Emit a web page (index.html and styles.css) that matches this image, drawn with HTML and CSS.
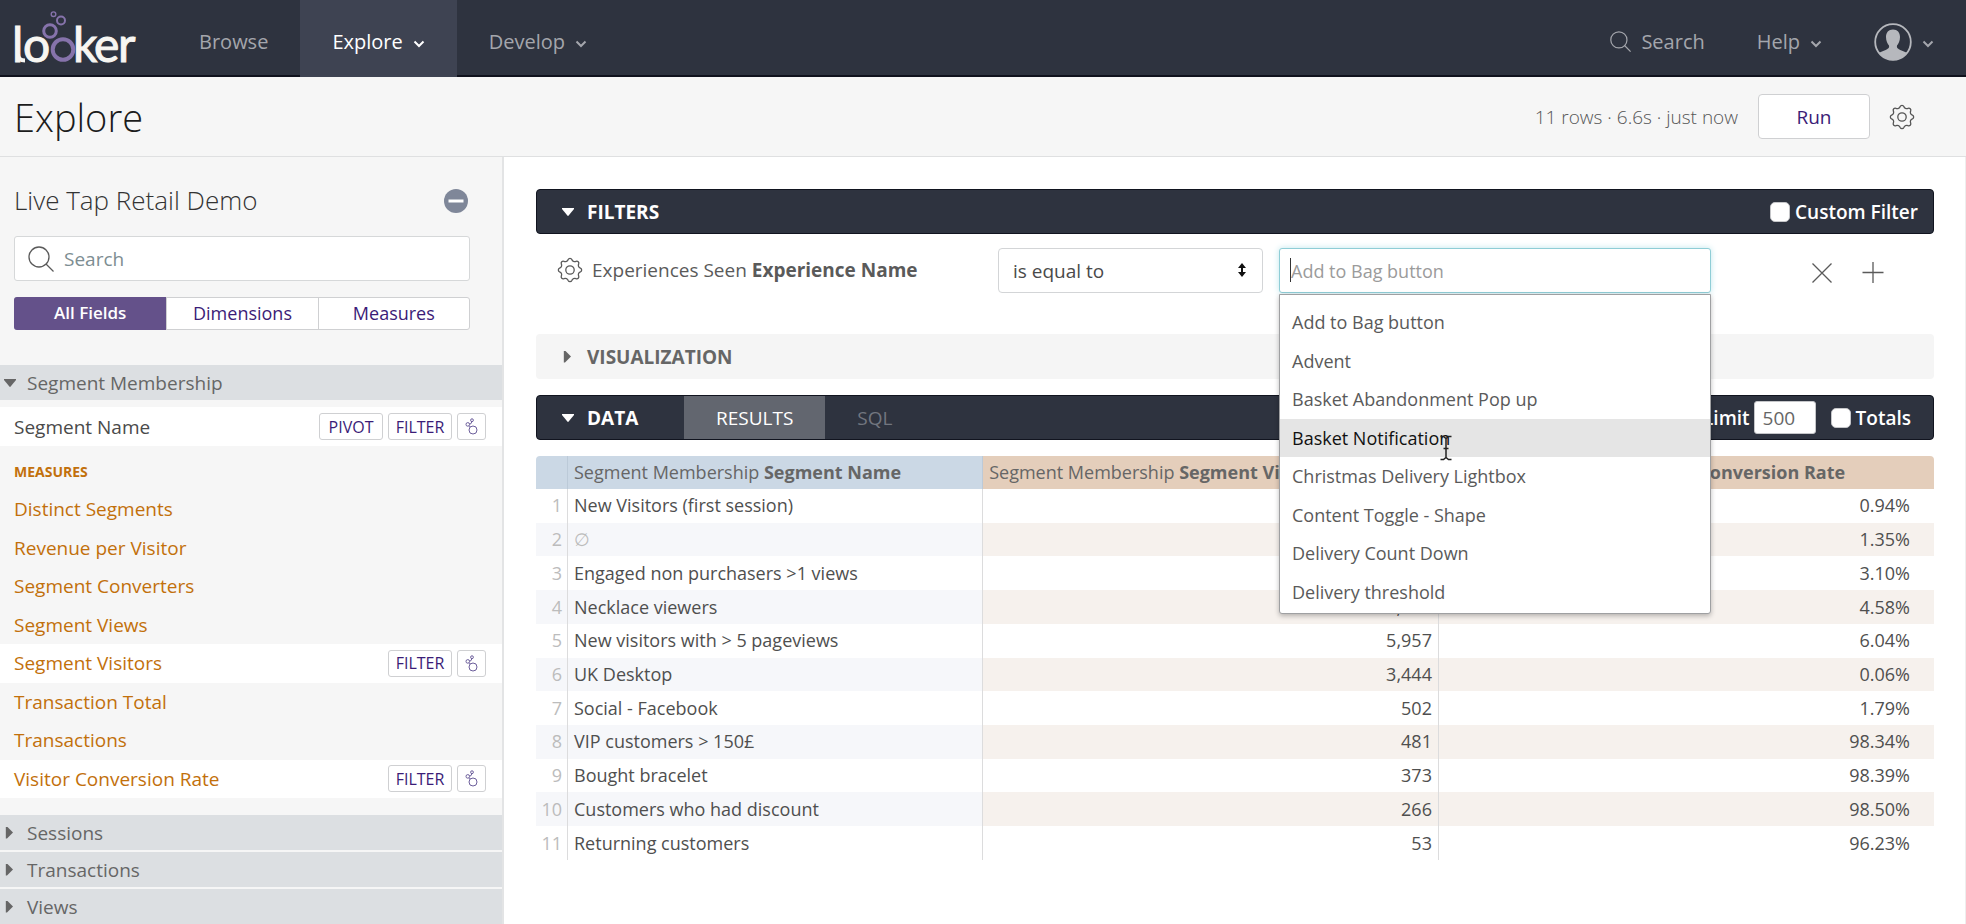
FILE: index.html
```html
<!DOCTYPE html>
<html lang="en">
<head>
<meta charset="utf-8">
<title>Explore - Looker</title>
<link rel="stylesheet" href="styles.css">
</head>
<body>
<svg class="defs" width="0" height="0" aria-hidden="true">
  <symbol id="gear" viewBox="-13 -13 26 26"><path d="M10.44-1.84A2 2 0 0 1 10.44 1.84A3 3 0 0 0 8.68 6.08A2 2 0 0 1 6.08 8.68A3 3 0 0 0 1.84 10.44A2 2 0 0 1-1.84 10.44A3 3 0 0 0-6.08 8.68A2 2 0 0 1-8.68 6.08A3 3 0 0 0-10.44 1.84A2 2 0 0 1-10.44-1.84A3 3 0 0 0-8.68-6.08A2 2 0 0 1-6.08-8.68A3 3 0 0 0-1.84-10.44A2 2 0 0 1 1.84-10.44A3 3 0 0 0 6.08-8.68A2 2 0 0 1 8.68-6.08A3 3 0 0 0 10.44-1.84Z"/><circle r="4.2"/></symbol>
  <symbol id="chevron" viewBox="0 0 12 8"><path d="M1.5 1.5L6 6L10.5 1.5"/></symbol>
  <symbol id="lens" viewBox="0 0 26 26"><circle cx="11" cy="11" r="10"/><path d="M18 18L25.5 25.5"/></symbol>
  <symbol id="bubbles" viewBox="0 0 13 17"><circle cx="8" cy="12" r="4"/><circle cx="2.8" cy="6.4" r="1.8"/><circle cx="7" cy="2.2" r="1.4"/><path d="M4.2 7.8L5.2 9M4.6 6.2Q6.6 6 6.8 3.6"/></symbol>
</svg>

<nav class="topbar">
  <a class="logo" href="#" aria-label="looker">
    <svg width="128" height="64" viewBox="0 0 128 64">
      <g class="logo-text">
        <text x="-1" y="51">l</text>
        <text x="10" y="51">o</text>
        <text x="60" y="51">k</text>
        <text x="81" y="51">e</text>
        <text x="105" y="51">r</text>
      </g>
      <path class="logo-tail" d="M5 43Q5 49.5 12 49.5"/>
      <g class="logo-rings">
        <circle cx="50" cy="38.5" r="10.3" stroke-width="4"/>
        <circle cx="37" cy="20" r="6.3" stroke-width="3"/>
        <circle cx="48" cy="9.5" r="4" stroke-width="2"/>
        <circle cx="40.5" cy="3.2" r="2.3" stroke-width="1.4"/>
      </g>
    </svg>
  </a>
  <a class="nav-item" href="#">Browse</a>
  <a class="nav-item active" href="#">Explore <svg class="chev"><use href="#chevron"/></svg></a>
  <a class="nav-item" href="#">Develop <svg class="chev"><use href="#chevron"/></svg></a>
  <div class="nav-right">
    <a href="#"><svg class="nav-lens"><use href="#lens"/></svg>Search</a>
    <a href="#">Help <svg class="chev"><use href="#chevron"/></svg></a>
    <a href="#" aria-label="Account">
      <svg class="avatar" viewBox="0 0 38 38"><circle cx="19" cy="19" r="17.8" fill="none" stroke="#b6b8bd" stroke-width="1.8"/><path d="M19 6.5C23.5 6.5 26 9.5 26 14C26 18 24.5 20.5 23 22.5C22.5 25.5 23.5 26 33.5 30A18.3 18.3 0 0 1 4.5 30C14.5 26 15.5 25.5 15 22.5C13.5 20.5 12 18 12 14C12 9.5 14.5 6.5 19 6.5Z" fill="#b6b8bd"/></svg>
      <svg class="chev"><use href="#chevron"/></svg></a>
  </div>
</nav>

<header class="page-head">
  <h1>Explore</h1>
  <span class="status">11 rows · 6.6s · just now</span>
  <button class="run">Run</button>
  <button class="icon-btn" aria-label="Settings"><svg class="gear"><use href="#gear"/></svg></button>
</header>

<div class="body">
  <aside class="sidebar">
    <div class="side-top">
      <div class="side-title">
        <h2>Live Tap Retail Demo</h2>
        <button class="icon-btn" aria-label="Collapse"><svg width="24" height="24" viewBox="0 0 24 24"><circle cx="12" cy="12" r="12" fill="#7f8799" stroke="none"/><path d="M4.5 12H19.5" stroke="#fff" stroke-width="3"/></svg></button>
      </div>
      <div class="side-search">
        <svg class="side-lens"><use href="#lens"/></svg>
        <input type="search" placeholder="Search" aria-label="Search fields">
      </div>
      <div class="segmented">
        <button class="on">All Fields</button><button>Dimensions</button><button>Measures</button>
      </div>
    </div>

    <button class="group open"><i class="tri down"></i>Segment Membership</button>
    <div class="field picked dimension">
      <span>Segment Name</span>
      <button class="tag">PIVOT</button><button class="tag">FILTER</button><button class="tag look" aria-label="Look"><svg><use href="#bubbles"/></svg></button>
    </div>
    <h3>MEASURES</h3>
    <div class="fields">
      <div class="field"><span>Distinct Segments</span></div>
      <div class="field"><span>Revenue per Visitor</span></div>
      <div class="field"><span>Segment Converters</span></div>
      <div class="field"><span>Segment Views</span></div>
      <div class="field picked"><span>Segment Visitors</span><button class="tag">FILTER</button><button class="tag look" aria-label="Look"><svg><use href="#bubbles"/></svg></button></div>
      <div class="field"><span>Transaction Total</span></div>
      <div class="field"><span>Transactions</span></div>
      <div class="field picked"><span>Visitor Conversion Rate</span><button class="tag">FILTER</button><button class="tag look" aria-label="Look"><svg><use href="#bubbles"/></svg></button></div>
    </div>
    <div class="groups">
      <button class="group"><i class="tri right"></i>Sessions</button>
      <button class="group"><i class="tri right"></i>Transactions</button>
      <button class="group"><i class="tri right"></i>Views</button>
    </div>
  </aside>

  <main>
    <section class="bar dark">
      <button class="bar-title"><i class="tri down"></i>FILTERS</button>
      <label class="check"><input type="checkbox">Custom Filter</label>
    </section>

    <div class="filter-row">
      <div class="filter-name"><svg class="gear"><use href="#gear"/></svg><span>Experiences Seen <b>Experience Name</b></span></div>
      <div class="select">
        <select aria-label="Condition"><option>is equal to</option></select>
        <svg width="8" height="14" viewBox="0 0 8 14"><path d="M4 0L8 5H5V9H8L4 14L0 9H3V5H0Z"/></svg>
      </div>
      <div class="combo">
        <input type="text" placeholder="Add to Bag button" aria-label="Experience name">
        <i class="caret"></i>
        <div class="menu" role="listbox">
          <div role="option">Add to Bag button</div>
          <div role="option">Advent</div>
          <div role="option">Basket Abandonment Pop up</div>
          <div role="option" class="hover">Basket Notification</div>
          <div role="option">Christmas Delivery Lightbox</div>
          <div role="option">Content Toggle - Shape</div>
          <div role="option">Delivery Count Down</div>
          <div role="option">Delivery threshold</div>
          <svg class="pointer" width="14" height="26" viewBox="0 0 14 26"><path d="M1.5 1.5H4.5L7 3.5L9.5 1.5H12.5M7 3.5V22.5M1.5 24.5H4.5L7 22.5L9.5 24.5H12.5M4.5 13.5H9.5"/></svg>
        </div>
      </div>
      <div class="filter-actions">
        <button class="icon-btn" aria-label="Remove filter"><svg width="22" height="22" viewBox="0 0 22 22"><path d="M1.5 1.5L20.5 20.5M20.5 1.5L1.5 20.5"/></svg></button>
        <button class="icon-btn" aria-label="Add filter"><svg width="22" height="22" viewBox="0 0 22 22"><path d="M0.5 10.5H21.5M11 0V21"/></svg></button>
      </div>
    </div>

    <section class="bar light">
      <button class="bar-title"><i class="tri right"></i>VISUALIZATION</button>
    </section>

    <section class="bar dark">
      <button class="bar-title data"><i class="tri down"></i>DATA</button>
      <button class="tab on">RESULTS</button>
      <button class="tab">SQL</button>
      <label class="limit">Row Limit <input type="text" value="500"></label>
      <label class="check totals"><input type="checkbox">Totals</label>
    </section>

    <table>
      <colgroup><col class="c-num"><col class="c-name"><col class="c-vis"><col></colgroup>
      <thead><tr><th></th><th>Segment Membership <b>Segment Name</b></th><th>Segment Membership <b>Segment Visitors</b></th><th>Segment Membership <b>Visitor Conversion Rate</b></th></tr></thead>
      <tbody>
        <tr><td>1</td><td>New Visitors (first session)</td><td></td><td>0.94%</td></tr>
        <tr><td>2</td><td class="null">∅</td><td></td><td>1.35%</td></tr>
        <tr><td>3</td><td>Engaged non purchasers &gt;1 views</td><td></td><td>3.10%</td></tr>
        <tr><td>4</td><td>Necklace viewers</td><td>6,122</td><td>4.58%</td></tr>
        <tr><td>5</td><td>New visitors with &gt; 5 pageviews</td><td>5,957</td><td>6.04%</td></tr>
        <tr><td>6</td><td>UK Desktop</td><td>3,444</td><td>0.06%</td></tr>
        <tr><td>7</td><td>Social - Facebook</td><td>502</td><td>1.79%</td></tr>
        <tr><td>8</td><td>VIP customers &gt; 150£</td><td>481</td><td>98.34%</td></tr>
        <tr><td>9</td><td>Bought bracelet</td><td>373</td><td>98.39%</td></tr>
        <tr><td>10</td><td>Customers who had discount</td><td>266</td><td>98.50%</td></tr>
        <tr><td>11</td><td>Returning customers</td><td>53</td><td>96.23%</td></tr>
      </tbody>
    </table>
  </main>
</div>
</body>
</html>
```
FILE: styles.css
```css
* { box-sizing: border-box; }
body {
  margin: 0;
  min-height: 100vh;
  display: flex;
  flex-direction: column;
  font-family: "Open Sans", "Noto Sans", sans-serif;
  font-size: 19px;
  color: #5a5a5a;
  background: #fff;
}
button, input, select { font: inherit; color: inherit; margin: 0; }
button { border: 0; padding: 0; background: none; cursor: pointer; }
a { color: inherit; text-decoration: none; }
svg { fill: none; stroke: currentColor; flex: none; }
.defs { position: absolute; }
h1, h2, h3 { margin: 0; font-weight: 300; }

/* top navigation */
.topbar {
  height: 77px;
  display: flex;
  background: #2e333f;
  color: #a4a6ac;
  font-size: 20px;
  border-bottom: 2px solid #10121d;
}
.logo { width: 167px; padding: 11px 0 0 13px; }
.logo-text text { font: 48px Lato, sans-serif; fill: #f7f6f2; stroke: #f7f6f2; stroke-width: 1; }
.logo-tail { stroke: #f7f6f2; stroke-width: 4; }
.logo-rings { stroke: #8673ab; }
.nav-item { display: flex; align-items: center; gap: 10px; padding: 8px 32px 0; }
.nav-item.active { background: #3e4352; color: #fff; margin-bottom: -2px; padding-bottom: 2px; }
.chev { width: 12px; height: 8px; stroke-width: 2; margin-top: 4px; }
.nav-right { margin-left: auto; display: flex; padding: 8px 32px 0 0; gap: 52px; }
.nav-right a { display: flex; align-items: center; gap: 10px; }
.nav-lens { width: 21px; height: 21px; stroke-width: 1.5; }
.avatar { width: 38px; height: 38px; stroke: none; }

/* page heading */
.page-head {
  height: 80px;
  display: flex;
  align-items: center;
  padding: 0 51px 0 14px;
  background: #f6f6f6;
  border-bottom: 1px solid #dfe0e1;
  color: #555;
}
.status { font-weight: 300; }
h1 { font-size: 38px; color: #1c1c1c; margin-right: auto; }
.run {
  width: 112px;
  height: 45px;
  margin: 0 19px 0 20px;
  background: #fff;
  border: 1px solid #cfd0d2;
  border-radius: 4px;
  color: #3b1c77;
}
.icon-btn { display: flex; }
.gear { width: 26px; height: 26px; stroke-width: 1.3; }

.body { flex: 1; display: flex; }

/* field picker */
.sidebar { width: 504px; flex: none; background: #f6f6f6; border-right: 2px solid #e3e4e5; }
.side-top { padding: 0 32px 0 14px; }
.side-title { display: flex; justify-content: space-between; align-items: center; height: 79px; padding: 8px 2px 0 0; }
h2 { font-size: 26px; line-height: 32px; padding-bottom: 2px; color: #333; }
.side-search { display: flex; align-items: center; height: 45px; gap: 10px; padding: 0 13px; background: #fff; border: 1px solid #d6d8d9; border-radius: 3px; }
.side-lens { width: 26px; height: 26px; stroke-width: 1.3; }
.side-search input { flex: 1; min-width: 0; border: 0; padding: 0; background: none; outline: 0; }
.side-search input::placeholder { color: #7d8d92; }
.segmented { display: grid; grid-template-columns: repeat(3, 1fr); height: 33px; margin: 16px 0 35px; border: 1px solid #cfd0d2; border-radius: 3px; background: #fff; font-size: 18px; line-height: 28px; color: #3b1c77; }
.segmented button { padding-bottom: 2px; }
.segmented button + button { border-left: 1px solid #cfd0d2; }
.segmented .on { background: #64518a; color: #fff; font-size: 17px; font-weight: 600; margin: -1px 0 -1px -1px; border-radius: 3px 0 0 3px; }

.group { display: flex; align-items: center; width: 100%; height: 35px; background: #dcdfe2; text-align: left; color: #666; }
.group .tri { margin: 0 11px 0 4px; }
.groups { display: grid; gap: 2px; margin-top: 17px; }
.tri { width: 12px; height: 12px; flex: none; background: currentColor; }
.tri.down { clip-path: polygon(0 20%, 100% 20%, 100% 30%, 50% 90%, 0 30%); }
.tri.right { clip-path: polygon(15% 0, 25% 0, 75% 50%, 25% 100%, 15% 100%); }

.fields { display: grid; grid-auto-rows: 1fr; height: 308px; }
.field { display: flex; align-items: center; gap: 5px; padding: 0 16px 0 14px; color: #c2700b; }
.field.dimension { height: 39px; margin-top: 7px; color: #4a4a4a; }
.field.picked { background: #fff; }
.field span { flex: 1; }
.tag { width: 64px; height: 27px; display: flex; align-items: center; justify-content: center; border: 1px solid #cfd0d2; border-radius: 3px; background: #fff; color: #3b1c77; font-size: 16px; line-height: 22px; }
.tag.look { width: 29px; color: #6d5f9c; }
.tag svg { width: 13px; height: 17px; stroke-width: 1; }
h3 { font-size: 14px; font-weight: 700; color: #c2700b; line-height: 20px; padding: 16px 14px 8px; }

/* explore panels */
main { flex: 1; min-width: 0; padding: 32px 31px 0 32px; border-right: 1px solid #eee; }
.bar { display: flex; align-items: stretch; height: 45px; border-radius: 4px; }
.bar.dark { background: #2e333f; color: #fff; border: 1px solid #11141f; }
.bar.light { background: #f5f5f5; color: #666; margin-bottom: 16px; }
.bar-title { display: flex; align-items: center; gap: 13px; padding-left: 25px; font-weight: 700; }
.bar.light .bar-title { padding-left: 26px; }
.bar-title.data { width: 147px; }
.tab { padding: 0 32px; color: #72767f; }
.tab.on { background: #62666f; color: #fff; }
.check { display: flex; align-items: center; gap: 5px; margin-left: auto; padding-right: 15px; font-weight: 600; }
.check input { appearance: none; width: 20px; height: 20px; background: #fff; border: 1px solid #c5c6c9; border-radius: 5px; }
.limit { display: flex; align-items: center; gap: 4px; margin-left: auto; font-weight: 600; }
.limit input { width: 62px; height: 33px; padding: 0 8px; border: 1px solid #c5c6c9; border-radius: 3px; background: #fff; color: #666; font-weight: 400; }
.check.totals { margin-left: 15px; padding-right: 22px; }

.filter-row { display: grid; grid-template-columns: 446fr 265fr 432fr 207fr; gap: 16px; height: 100px; padding-top: 14px; }
.filter-name { display: flex; gap: 9px; height: 44px; align-items: center; padding-left: 21px; }
.select { position: relative; height: 45px; }
.select select { appearance: none; width: 100%; height: 45px; padding: 0 14px; border: 1px solid #d3d5d7; border-radius: 4px; background: #fff; color: #4a4a4a; }
.select svg { position: absolute; right: 17px; top: 15px; fill: #111; stroke: none; }
.combo { position: relative; height: 45px; }
.combo input { width: 100%; height: 45px; padding: 0 11px; border: 1px solid #8fcdd6; border-radius: 3px; outline: 0; box-shadow: 0 0 6px #bfe6ec; font-size: 18px; background: #fff; }
.combo input::placeholder { color: #9b9b9b; }
.caret { position: absolute; left: 11px; top: 10px; width: 1px; height: 24px; background: #333; }
.menu {
  position: absolute;
  top: 46px;
  left: 0;
  right: 0;
  display: grid;
  grid-auto-rows: 1fr;
  height: 320px;
  padding: 8px 0 2px;
  background: #fff;
  border: 1px solid #9fa0a2;
  border-radius: 0 0 3px 3px;
  box-shadow: 0 2px 5px #0004;
  font-size: 18px;
}
.menu div { display: flex; align-items: center; padding: 0 12px; }
.menu .hover { background: #e5e5e5; color: #111; }
.pointer { position: absolute; left: 159px; top: 140px; stroke: #222; stroke-width: 1.5; }
.filter-actions { display: flex; gap: 29px; align-items: center; height: 50px; padding-left: 84px; }
.filter-actions svg { stroke-width: 1.3; }

/* results */
table { width: 100%; height: 404px; margin-top: 16px; table-layout: fixed; border-collapse: separate; border-spacing: 0; font-size: 18px; line-height: 26px; color: #4f4f4f; }
.c-num { width: 32px; }
.c-name { width: 29.7%; }
.c-vis { width: 32.6%; }
th, td { padding: 0 6px 1px; font-weight: 400; text-align: left; white-space: nowrap; border-right: 1px solid #dcdcdd; }
th { height: 33px; color: #666; background: #e4cebb; border-color: #d9c5b3; }
th:nth-child(-n+2) { background: #cbd8e5; border-color: #bccad8; }
th:first-child { border-radius: 4px 0 0 0; }
th:last-child { border-radius: 0 4px 0 0; }
th:last-child, td:last-child { border-right: 0; }
td:first-child { text-align: right; padding: 0 5px 1px 0; color: #bcbcbc; }
td:nth-child(3) { text-align: right; }
td:last-child { text-align: right; padding-right: 24px; }
tbody tr:nth-child(even) td { background: #f6f1ed; }
tbody tr:nth-child(even) td:nth-child(-n+2) { background: #f6f7fa; }
.null { color: #bcbcbc; }
```
